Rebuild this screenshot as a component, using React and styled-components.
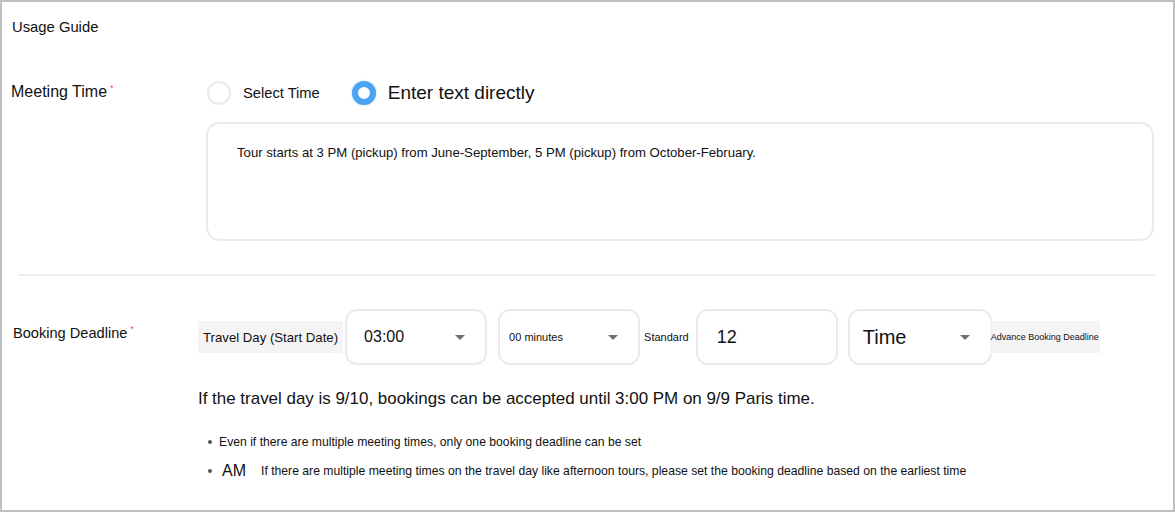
import React from 'react'
import styled, { createGlobalStyle } from 'styled-components'

const Global = createGlobalStyle`
  html, body { margin: 0; padding: 0; background: #fff; }
  body { font-family: "Liberation Sans", Arial, sans-serif; color: #111; }
`

const Frame = styled.div`
  box-sizing: border-box;
  width: 1175px;
  height: 512px;
  border: 2px solid #bfbfbf;
  background: #fff;
  overflow: hidden;
`

const Title = styled.div`
  padding: 16px 0 0 10px;
  font-size: 14.8px;
  line-height: 18px;
  color: #111;
`

const Row = styled.div`
  display: grid;
  grid-template-columns: 187px 1fr;
  padding-left: ${p => p.pl || 9}px;
  margin-top: ${p => p.mt || 0}px;
`

const Label = styled.div`
  font-size: ${p => p.size || 16}px;
  line-height: 20px;
  padding-top: ${p => p.pt || 0}px;
  color: #111;
  display: flex;
  align-items: flex-start;
  sup {
    color: #ee4d5f;
    font-size: 9px;
    line-height: 8px;
    margin-left: 3px;
    margin-top: ${p => p.supTop || 2}px;
  }
`

const RadioGroup = styled.div`
  display: flex;
  align-items: center;
  margin: -1px 0 0 9px;
  height: 24px;
`

const RadioDot = styled.span`
  box-sizing: border-box;
  width: 24px;
  height: 24px;
  border-radius: 50%;
  border: ${p => p.on ? '6px solid #4ba3f1' : '2px solid #e8eaee'};
  box-shadow: ${p => p.on ? '0 0 2px rgba(75,163,241,0.6)' : 'none'};
  background: #fff;
  flex-shrink: 0;
`

const RadioText = styled.span`
  margin: 0 ${p => p.mr || 0}px 0 12px;
  font-size: ${p => p.size}px;
  color: #111;
  white-space: nowrap;
`

const TextBox = styled.div`
  box-sizing: border-box;
  margin: 17px 0 0 8px;
  width: 948px;
  height: 119px;
  border: 2px solid #e9ebef;
  border-radius: 14px;
  padding: 21px 0 0 29px;
  font-size: 13.15px;
  line-height: 16px;
  color: #111;
`

const Divider = styled.div`
  margin: 33px 18px 0 16px;
  height: 2px;
  background: #efeff2;
`

const Controls = styled.div`
  display: flex;
  align-items: center;
  margin-left: -2px;
`

const Tag = styled.div`
  height: 32px;
  display: flex;
  align-items: center;
  padding: 0 ${p => p.px || 0}px;
  background: ${p => p.bg ? '#f4f4f5' : 'transparent'};
  font-size: ${p => p.size}px;
  color: #111;
  white-space: nowrap;
  margin-left: ${p => p.ml || 0}px;
`

const Box = styled.div`
  box-sizing: border-box;
  width: ${p => p.w || 142}px;
  height: 56px;
  border: 2px solid #e9ebef;
  border-radius: 12px;
  display: flex;
  align-items: center;
  justify-content: space-between;
  padding: 0 20px 0 ${p => p.pl || 16}px;
  margin-left: ${p => p.ml || 0}px;
  font-size: ${p => p.size}px;
  color: #111;
  background: #fff;
  flex-shrink: 0;
`

const Caret = styled.span`
  width: 0;
  height: 0;
  border-left: 5px solid transparent;
  border-right: 5px solid transparent;
  border-top: 5px solid #6b6f76;
`

const Note = styled.div`
  margin: 24px 0 0 196px;
  font-size: 16.95px;
  line-height: 20px;
  color: #111;
`

const List = styled.ul`
  list-style: none;
  margin: 25px 0 0 206px;
  padding: 0;
`

const Item = styled.li`
  display: flex;
  align-items: center;
  height: 16px;
  margin-bottom: ${p => p.mb || 0}px;
  font-size: 12.2px;
  color: #111;
  &:before {
    content: '';
    width: 4px;
    height: 4px;
    border-radius: 50%;
    background: #555;
    margin-right: ${p => p.bullet || 7}px;
    flex-shrink: 0;
  }
`

const Big = styled.span`
  font-size: 16px;
  margin-right: 15px;
`

export default function App() {
  return (
    <Frame>
      <Global />
      <Title>Usage Guide</Title>

      <Row pl={9} mt={46}>
        <Label size={16}>Meeting Time<sup>*</sup></Label>
        <div>
          <RadioGroup>
            <RadioDot />
            <RadioText size={14.7} mr={32}>Select Time</RadioText>
            <RadioDot on />
            <RadioText size={19}>Enter text directly</RadioText>
          </RadioGroup>
          <TextBox>
            Tour starts at 3 PM (pickup) from June-September, 5 PM (pickup) from October-February.
          </TextBox>
        </div>
      </Row>

      <Divider />

      <Row pl={11} mt={33}>
        <Label size={14.6} pt={14}>Booking Deadline<sup>*</sup></Label>
        <Controls>
          <Tag bg px={5} size={13.2}>Travel Day (Start Date)</Tag>
          <Box ml={2} size={16} pl={17}>03:00<Caret /></Box>
          <Box ml={11} size={11} pl={9}>00 minutes<Caret /></Box>
          <Tag size={11} ml={4}>Standard</Tag>
          <Box ml={7} size={18} pl={19}>12<span /></Box>
          <Box ml={10} w={144} size={20} pl={13}>Time<Caret /></Box>
          <Tag bg size={9} ml={-2} px={1}>Advance Booking Deadline</Tag>
        </Controls>
      </Row>

      <Note>If the travel day is 9/10, bookings can be accepted until 3:00 PM on 9/9 Paris time.</Note>

      <List>
        <Item mb={13}>Even if there are multiple meeting times, only one booking deadline can be set</Item>
        <Item bullet={10}><Big>AM</Big>If there are multiple meeting times on the travel day like afternoon tours, please set the booking deadline based on the earliest time</Item>
      </List>
    </Frame>
  )
}
